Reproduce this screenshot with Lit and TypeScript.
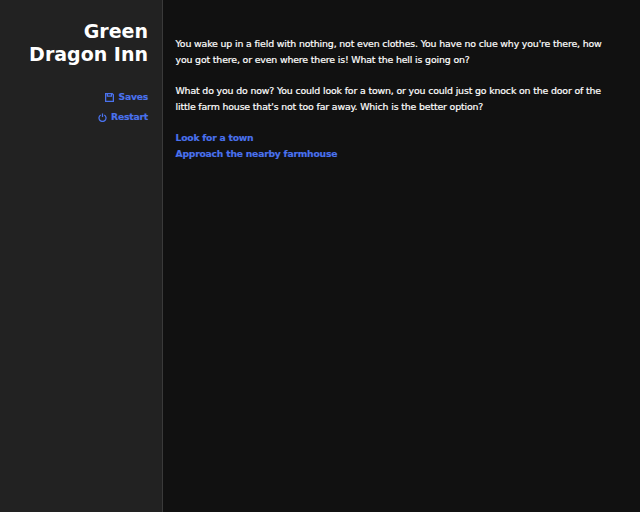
import { LitElement, html, css } from "lit";
import { customElement } from "lit/decorators.js";

@customElement("app-root")
export class AppRoot extends LitElement {
  static styles = css`
    :host {
      display: flex;
      width: 640px;
      height: 512px;
      background: #111111;
      color: #fff;
      font-family: "DejaVu Sans", sans-serif;
      overflow: hidden;
    }
    .side {
      box-sizing: border-box;
      width: 163px;
      height: 512px;
      flex: none;
      background: #222222;
      border-right: 1px solid #3a3a3a;
      padding: 20px 14px 0 0;
      text-align: right;
    }
    h1 {
      margin: 0 0 23px;
      font-size: 19px;
      line-height: 23px;
      font-weight: 700;
    }
    .menu {
      display: flex;
      flex-direction: column;
      align-items: flex-end;
      gap: 4px;
    }
    a {
      color: #4a72ee;
      font-weight: 700;
      text-decoration: none;
      font-size: 9.2px;
      letter-spacing: -0.2px;
      -webkit-text-stroke: 0.15px currentColor;
    }
    .menu a {
      display: flex;
      align-items: center;
      gap: 4px;
      line-height: 16px;
    }
    svg { display: block; }
    main {
      flex: 1;
      padding: 36px 28px 0 12.5px;
      font-size: 9.4px;
      letter-spacing: -0.15px;
      line-height: 16px;
      -webkit-text-stroke: 0.2px currentColor;
    }
    p { margin: 0 0 15px; }
    .choices { display: flex; flex-direction: column; align-items: flex-start; }
  `;

  render() {
    return html`
      <aside class="side">
        <h1>Green<br />Dragon Inn</h1>
        <nav class="menu">
          <a href="#">
            <svg width="9" height="9" viewBox="0 0 10 10" fill="none" stroke="currentColor" stroke-width="1.4">
              <path d="M.7.7h7.3l1.3 1.3v7.3h-8.6z" />
              <path d="M2.6.7v2.9h4.6v-2.9" />
            </svg>
            Saves
          </a>
          <a href="#">
            <svg width="9" height="9" viewBox="0 0 10 10" fill="none" stroke="currentColor" stroke-width="1.4">
              <path d="M3 2.2a3.9 3.9 0 1 0 4 0" />
              <path d="M5 .5v4" />
            </svg>
            Restart
          </a>
        </nav>
      </aside>
      <main>
        <p>You wake up in a field with nothing, not even clothes. You have no clue why you're there, how you got there, or even where there is! What the hell is going on?</p>
        <p>What do you do now? You could look for a town, or you could just go knock on the door of the little farm house that's not too far away. Which is the better option?</p>
        <div class="choices">
          <a href="#">Look for a town</a>
          <a href="#">Approach the nearby farmhouse</a>
        </div>
      </main>
    `;
  }
}
